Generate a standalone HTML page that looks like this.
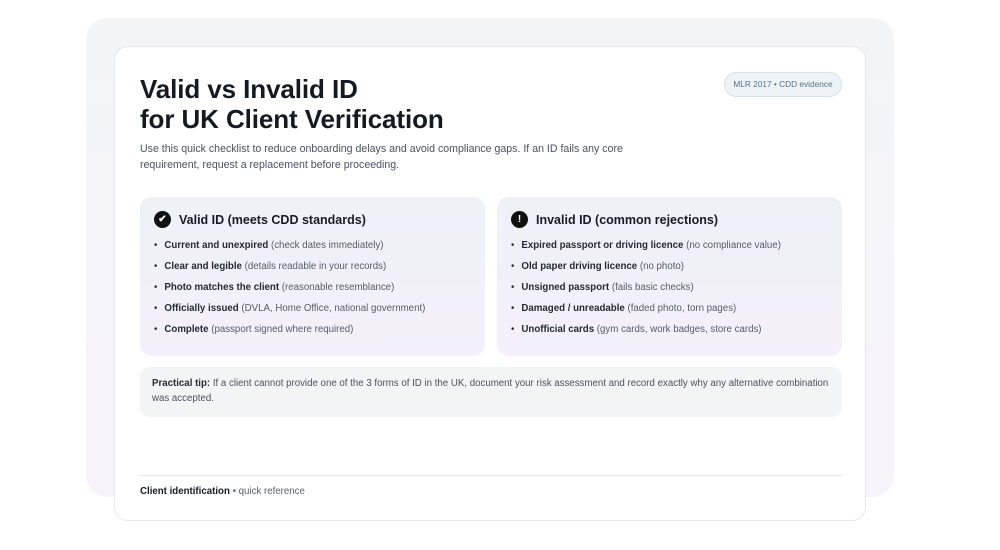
<!DOCTYPE html>
<html><head><meta charset="utf-8"><style>
*{box-sizing:border-box;margin:0;padding:0}
body{width:1000px;height:550px;background:#fff;font-family:"Liberation Sans",sans-serif;position:relative;overflow:hidden;color:#1a1f2b}
.bg{position:absolute;left:86px;top:18px;width:808px;height:479px;border-radius:22px;background:linear-gradient(#f2f5f8,#f7f3fb)}
.card{position:absolute;left:114px;top:46px;width:752px;height:475px;background:#fff;border:1px solid #e4e7eb;border-radius:14px}
h1{position:absolute;left:25px;top:27px;font-size:26px;line-height:30px;font-weight:bold;color:#151a22;letter-spacing:-0.1px}
.pill{position:absolute;left:609px;top:25px;width:118px;height:25px;border:1px solid #d6e0ea;background:#eef3f8;border-radius:13px;font-size:8.3px;color:#5a6f88;text-align:center;line-height:23px}
.intro{position:absolute;left:25px;top:94px;font-size:10.6px;line-height:16px;color:#4a5160;width:520px}
.box{position:absolute;top:150px;width:345px;height:159px;border-radius:12px;background:linear-gradient(#edf1f6,#f5f0fb)}
.box h2{position:absolute;left:14px;top:14px;font-size:12.5px;font-weight:bold;color:#161b24;display:flex;align-items:center}
.ic{width:17px;height:17px;border-radius:50%;background:#111;color:#fff;font-size:10px;display:inline-flex;align-items:center;justify-content:center;margin-right:8px}
ul{position:absolute;left:14px;top:43px;list-style:none;font-size:9.7px;color:#555c68}
li{height:21px;line-height:12px}
li:before{content:"•";margin-right:7px;color:#333}
li b{color:#252a33}
.tip{position:absolute;left:25px;top:320px;width:702px;height:50px;border-radius:10px;background:#f3f4f5;padding:9px 12px;font-size:9.7px;line-height:15px;color:#4a5160}
.tip b{color:#252a33}
.hr{position:absolute;left:25px;top:428px;width:702px;height:1px;background:#e3e6ea}
.foot{position:absolute;left:25px;top:439px;font-size:9.7px;color:#5a6170}
.foot b{color:#161b24}
</style></head><body>
<div class="bg"></div>
<div class="card">
<h1>Valid vs Invalid ID<br>for UK Client Verification</h1>
<div class="pill">MLR 2017 • CDD evidence</div>
<div class="intro">Use this quick checklist to reduce onboarding delays and avoid compliance gaps. If an ID fails any core requirement, request a replacement before proceeding.</div>
<div class="box" style="left:25px">
<h2><span class="ic">✔</span>Valid ID (meets CDD standards)</h2>
<ul>
<li><b>Current and unexpired</b> (check dates immediately)</li>
<li><b>Clear and legible</b> (details readable in your records)</li>
<li><b>Photo matches the client</b> (reasonable resemblance)</li>
<li><b>Officially issued</b> (DVLA, Home Office, national government)</li>
<li><b>Complete</b> (passport signed where required)</li>
</ul></div>
<div class="box" style="left:382px">
<h2><span class="ic" style="font-weight:bold">!</span>Invalid ID (common rejections)</h2>
<ul>
<li><b>Expired passport or driving licence</b> (no compliance value)</li>
<li><b>Old paper driving licence</b> (no photo)</li>
<li><b>Unsigned passport</b> (fails basic checks)</li>
<li><b>Damaged / unreadable</b> (faded photo, torn pages)</li>
<li><b>Unofficial cards</b> (gym cards, work badges, store cards)</li>
</ul></div>
<div class="tip"><b>Practical tip:</b> If a client cannot provide one of the 3 forms of ID in the UK, document your risk assessment and record exactly why any alternative combination was accepted.</div>
<div class="hr"></div>
<div class="foot"><b>Client identification</b> • quick reference</div>
</div>
</body></html>
